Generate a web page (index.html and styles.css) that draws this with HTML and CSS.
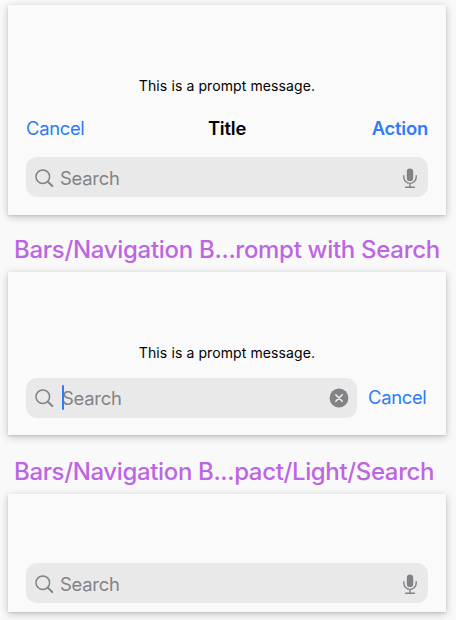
FILE: index.html
```
<!DOCTYPE html>
<html lang="en">
<head>
    <meta charset="UTF-8">
    <title>Navigation Bars</title>
    <link rel="stylesheet" href="styles.css">
</head>
<body>
    <svg class="sprite">
        <symbol id="glass" viewBox="0 0 20 20">
            <circle cx="7.8" cy="8.7" r="6.8" fill="none" stroke="currentColor" stroke-width="1.5"/>
            <path d="M12.7 13.6 L17.3 18" fill="none" stroke="currentColor" stroke-width="2" stroke-linecap="round"/>
        </symbol>
        <symbol id="mic" viewBox="0 0 14 20">
            <rect x="3.8" y="0.5" width="6.4" height="12.6" rx="3.2" fill="currentColor"/>
            <path d="M0.8 7.8 V9.2 a6.2 6.2 0 0 0 12.4 0 V7.8 M7 15.4 V19.2 M2.6 19.2 H11.4" fill="none" stroke="currentColor" stroke-width="1.4" stroke-linecap="round"/>
        </symbol>
        <symbol id="clear" viewBox="0 0 20 20">
            <circle cx="10" cy="10" r="9.4" fill="currentColor"/>
            <path d="M6.8 6.8 L13.2 13.2 M13.2 6.8 L6.8 13.2" stroke="#eeeeef" stroke-width="1.6" stroke-linecap="round"/>
        </symbol>
    </svg>

    <div class="bar bar-title">
        <p class="prompt">This is a prompt message.</p>
        <div class="nav">
            <span class="link">Cancel</span>
            <span class="title">Title</span>
            <span class="link action">Action</span>
        </div>
        <div class="search">
            <svg class="glass"><use href="#glass"/></svg>
            <span class="placeholder">Search</span>
            <svg class="mic"><use href="#mic"/></svg>
        </div>
    </div>
    <h2 class="label label-first">Bars/Navigation B...rompt with Search</h2>

    <div class="bar bar-active">
        <p class="prompt">This is a prompt message.</p>
        <div class="search-row">
            <div class="search">
                <svg class="glass"><use href="#glass"/></svg>
                <span class="placeholder focused">Search</span>
                <svg class="clear"><use href="#clear"/></svg>
            </div>
            <span class="link">Cancel</span>
        </div>
    </div>
    <h2 class="label label-second">Bars/Navigation B...pact/Light/Search</h2>

    <div class="bar bar-search">
        <div class="search">
            <svg class="glass"><use href="#glass"/></svg>
            <span class="placeholder">Search</span>
            <svg class="mic"><use href="#mic"/></svg>
        </div>
    </div>
</body>
</html>
```
FILE: styles.css
```
* {
    box-sizing: border-box;
}

body {
    font-family: Inter, "Liberation Sans", sans-serif;
    margin: 0;
    padding: 5px 10px 8px 8px;
    height: 620px;
    overflow: hidden;
    background-color: #f9f9f9;
    color: #000;
}

.sprite {
    display: none;
}

.bar {
    background-color: #fafafa;
    box-shadow: 0 2px 8px rgba(0, 0, 0, 0.22), 0 1px 2px rgba(0, 0, 0, 0.1);
    padding: 0 18px;
}

.bar-title {
    height: 210px;
    padding-top: 71px;
}

.bar-active {
    height: 163px;
    padding-top: 71px;
}

.bar-search {
    height: 118px;
    padding-top: 69px;
}

.prompt {
    margin: 0;
    font-size: 14px;
    line-height: 20px;
    letter-spacing: 0.1px;
    text-align: center;
}

.nav {
    display: grid;
    grid-template-columns: 1fr auto 1fr;
    align-items: center;
    height: 40px;
    margin-top: 12px;
    margin-bottom: 9px;
}

.link {
    font-size: 18.4px;
    line-height: 24px;
    letter-spacing: -0.3px;
    color: #2f7cf6;
}

.title,
.action {
    font-size: 18.4px;
    line-height: 24px;
    font-weight: 600;
    letter-spacing: -0.2px;
}

.action {
    text-align: right;
}

.search {
    display: flex;
    align-items: center;
    height: 40px;
    padding: 2px 11px 0 9px;
    border-radius: 11px;
    background-color: #e9e9ea;
    color: #838387;
}

.search-row {
    display: flex;
    align-items: center;
    margin-top: 15px;
}

.search-row .search {
    width: 331px;
    margin-right: 11px;
    padding-top: 0;
    padding-right: 8px;
}

.search-row .link {
    padding-bottom: 2px;
}

.placeholder {
    flex: 1;
    margin-left: 5px;
    font-size: 18.4px;
    line-height: 24px;
    letter-spacing: -0.25px;
}

/* text cursor in front of the placeholder */
.focused {
    position: relative;
    margin-left: 7px;
}

.focused::before {
    content: "";
    position: absolute;
    left: 0;
    top: -1px;
    width: 2px;
    height: 25px;
    border-radius: 1px;
    background-color: #2f7cf6;
}

.glass {
    width: 20px;
    height: 20px;
}

.mic {
    width: 14px;
    height: 20px;
}

.clear {
    width: 20px;
    height: 20px;
}

.label {
    margin: 0;
    height: 57px;
    padding-left: 6px;
    font-size: 24px;
    font-weight: 500;
    line-height: 30px;
    white-space: nowrap;
    color: #bd66e3;
}

.label-first {
    padding-top: 20px;
    letter-spacing: -0.3px;
}

.label-second {
    height: 59px;
    padding-top: 22px;
    letter-spacing: -0.36px;
}
```
